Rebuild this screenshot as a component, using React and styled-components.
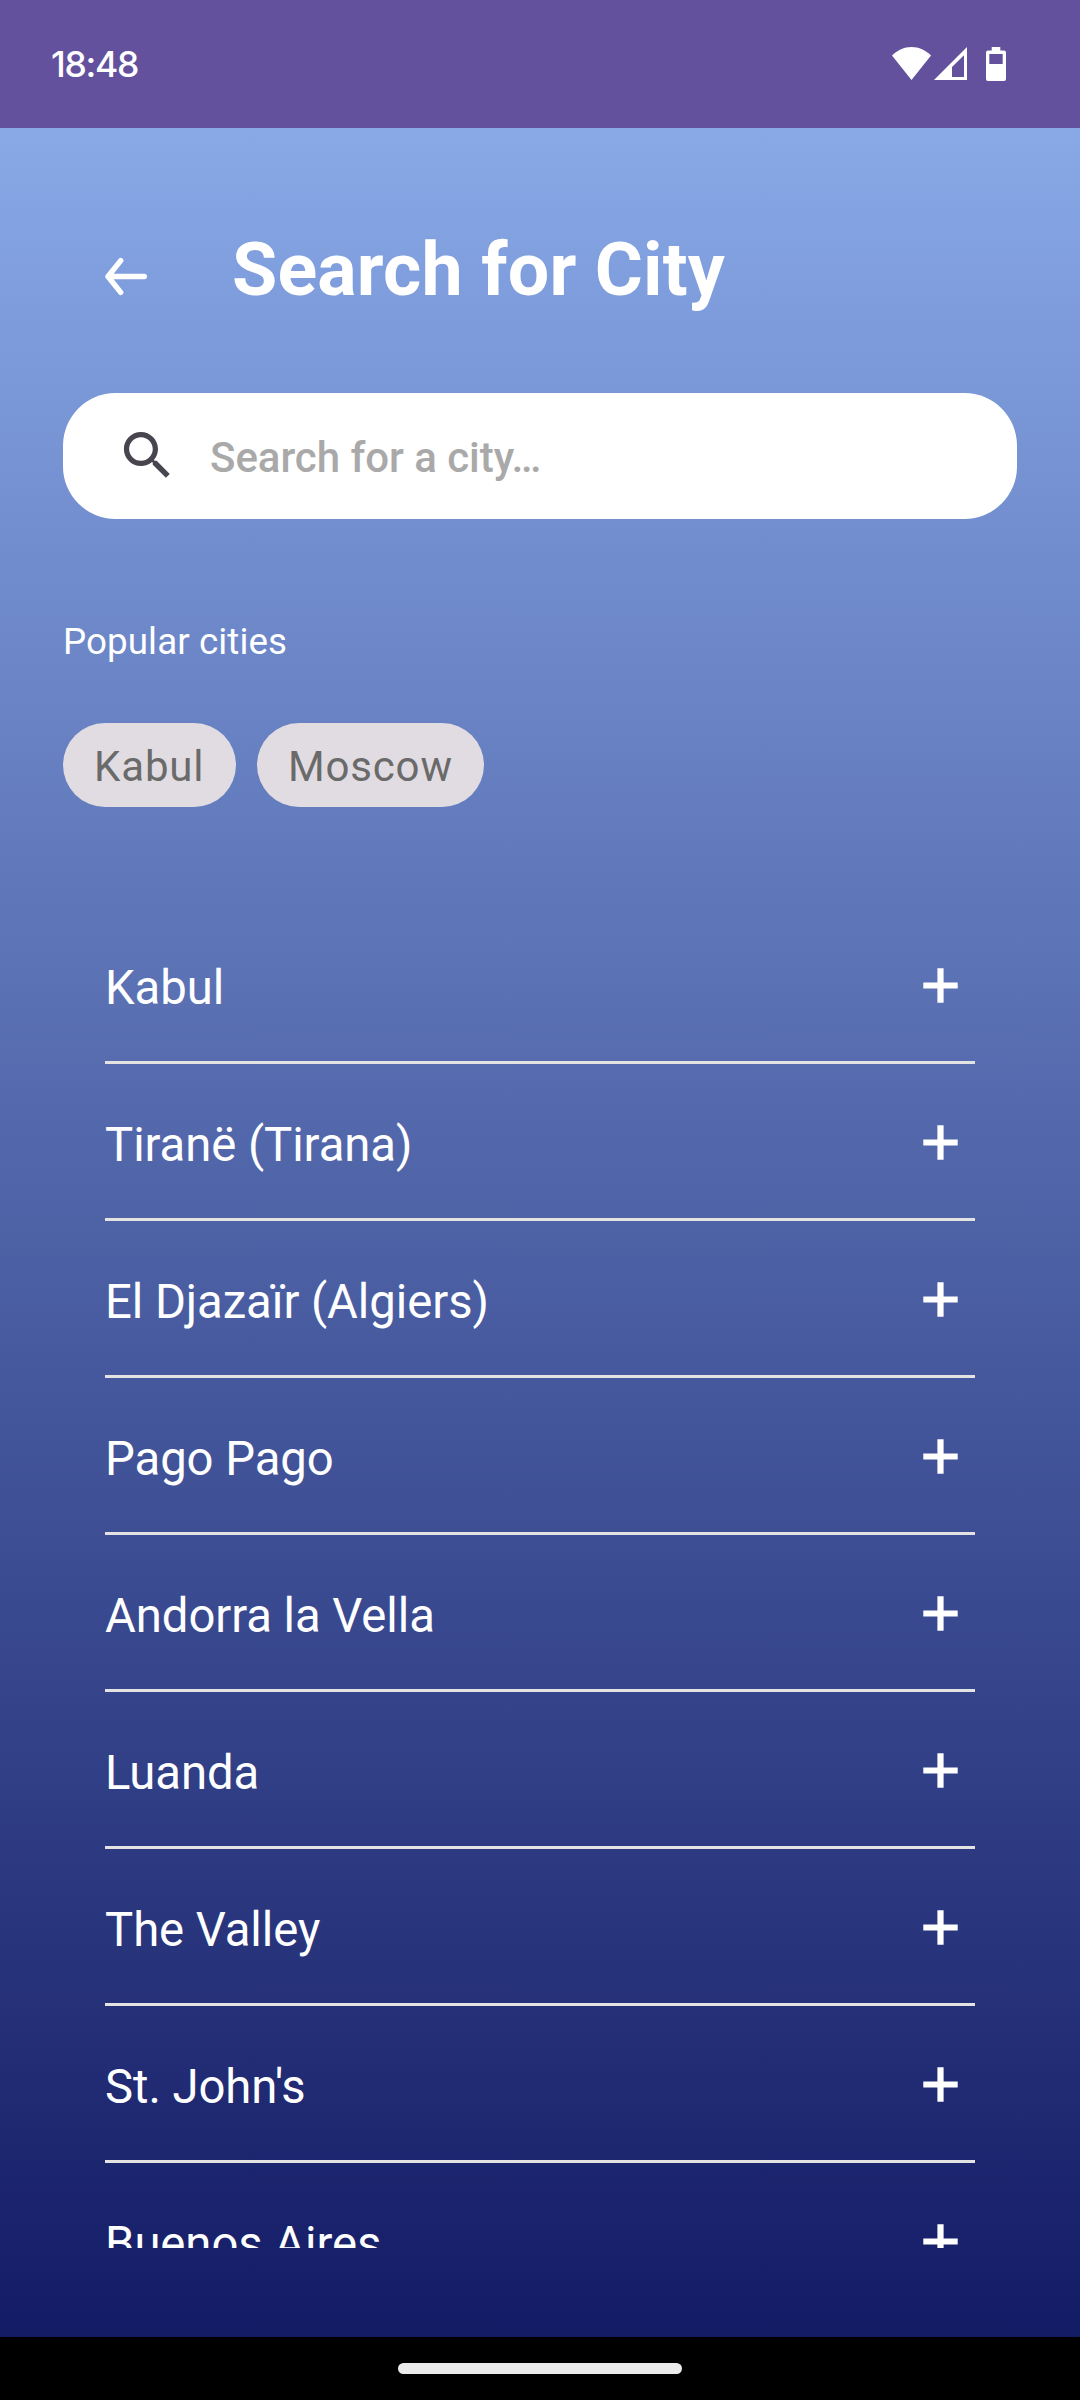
import React from "react";
import styled, { createGlobalStyle } from "styled-components";

const GlobalStyle = createGlobalStyle`
  * { box-sizing: border-box; }
  body { margin: 0; font-family: Roboto, "Noto Sans", sans-serif; }
  ul { list-style: none; margin: 0; padding: 0; }
  svg { display: block; flex: none; }
`;

const Screen = styled.div`
  width: 1080px;
  height: 2400px;
  display: flex;
  flex-direction: column;
  overflow: hidden;
  color: #fff;
`;

const StatusBar = styled.header`
  height: 128px;
  flex: none;
  display: flex;
  align-items: center;
  justify-content: space-between;
  padding: 0 74px 0 51px;
  background: #64519e;
`;

const Clock = styled.time`
  padding-top: 2px;
  font: 550 35.5px/44px Inter, sans-serif;
  letter-spacing: -1.3px;
`;

const StatusIcons = styled.div`
  display: flex;
  align-items: center;
`;

const Content = styled.main`
  flex: 1;
  min-height: 0;
  display: flex;
  flex-direction: column;
  padding: 96px 63px 89px;
  background: linear-gradient(180deg, #88a8e6 0%, #131b65 100%);
`;

const TitleRow = styled.div`
  height: 106px;
  display: flex;
  align-items: flex-start;
  padding: 3px 0 0 42px;
  gap: 85px;
`;

const BackButton = styled.button`
  border: 0;
  background: none;
  margin: 0;
  padding: 30px 0 0;
`;

const Title = styled.h1`
  margin: 0;
  font-size: 73.5px;
  line-height: 86px;
  font-weight: 700;
  letter-spacing: 0.15px;
  white-space: nowrap;
`;

const SearchField = styled.label`
  height: 126px;
  flex: none;
  margin-top: 63px;
  display: flex;
  align-items: center;
  gap: 31px;
  padding: 0 53px 1px;
  border-radius: 52.5px;
  background: #fff;
`;

const SearchInput = styled.input`
  flex: 1;
  min-width: 0;
  border: 0;
  padding: 4px 0 0;
  outline: 0;
  background: none;
  font: 500 42px/50px Roboto, sans-serif;
  letter-spacing: -0.04px;
  &::placeholder { color: #a9a9a9; opacity: 1; }
`;

const SectionLabel = styled.h2`
  margin: 101px 0 0;
  font-size: 36.75px;
  line-height: 44px;
  font-weight: 400;
  letter-spacing: 0.08px;
`;

const Chips = styled.div`
  display: flex;
  gap: 21px;
  margin-top: 59px;
`;

const Chip = styled.button`
  height: 84px;
  border: 0;
  border-radius: 42px;
  padding: 3px 31.5px 0 31px;
  background: #e1dce2;
  color: #6a6a6a;
  font: 400 42px/50px Roboto, sans-serif;
  letter-spacing: 0.85px;
`;

const CityList = styled.ul`
  flex: 1;
  min-height: 0;
  margin-top: 100px;
  padding: 0 42px;
  overflow: hidden;
`;

const CityRow = styled.li`
  height: 157px;
  display: flex;
  align-items: center;
  justify-content: space-between;
  padding: 2px 17px 0 0;
  border-bottom: 3px solid #e3e3e3;
`;

const CityName = styled.span`
  font-size: 47.25px;
  line-height: 56px;
  padding-top: 5px;
  letter-spacing: -0.06px;
`;

const NavBar = styled.footer`
  height: 63px;
  flex: none;
  display: flex;
  align-items: center;
  justify-content: center;
  background: #000;
`;

const Handle = styled.div`
  width: 284px;
  height: 11px;
  border-radius: 5.5px;
  background: #ebebeb;
`;

const WifiIcon = () => (
  <svg width="39" height="34" viewBox="0 0 39 34" fill="#fff">
    <path d="M0 8.6C5.5 3 12 0 19.5 0S33.500 3 39 8.600L19.500 33Z" />
  </svg>
);

const SignalIcon = styled(({ className }) => (
  <svg className={className} width="33" height="34" viewBox="0 0 33 34" fill="#fff">
    <path fillRule="evenodd" d="M33 0V33H0ZM30 8.200L18 20V30H30Z" />
  </svg>
))`
  margin: 0 19px 0 3px;
`;

const BatteryIcon = () => (
  <svg width="20" height="34" viewBox="0 0 20 34" fill="#fff">
    <path
      fillRule="evenodd"
      d="M5.700 0H14.300V3.500H18Q20 3.500 20 5.500V32Q20 34 18 34H2Q0 34 0 32V5.500Q0 3.500 2 3.500H5.700ZM3.300 7V17H16.700V7Z"
    />
  </svg>
);

const BackIcon = () => (
  <svg width="42" height="39" viewBox="0 0 42 39" fill="none" stroke="#fff" strokeWidth="5.400" strokeLinecap="round" strokeLinejoin="round">
    <path d="M39.300 19.500H3M15.700 3.600L3 19.500L15.700 35.400" />
  </svg>
);

const SearchIcon = () => (
  <svg width="63" height="63" viewBox="0 0 24 24" fill="#49454f">
    <path d="M15.5 14h-.79l-.28-.27C15.410 12.590 16 11.110 16 9.500 16 5.910 13.090 3 9.500 3S3 5.910 3 9.500 5.910 16 9.500 16c1.610 0 3.090-.59 4.230-1.570l.27.28v.79l5 4.990L20.490 19l-4.990-5zm-6 0C7.010 14 5 11.990 5 9.500S7.010 5 9.500 5 14 7.010 14 9.500 11.990 14 9.500 14z" />
  </svg>
);

const PlusIcon = () => (
  <svg width="35" height="35" viewBox="0 0 35 35" fill="#fff">
    <path d="M14.400 .3H20.600V14.400H34.700V20.600H20.600V34.700H14.400V20.600H.3V14.400H14.400Z" />
  </svg>
);

const popular = ["Kabul", "Moscow"];
const cities = [
  "Kabul",
  "Tiranë (Tirana)",
  "El Djazaïr (Algiers)",
  "Pago Pago",
  "Andorra la Vella",
  "Luanda",
  "The Valley",
  "St. John's",
  "Buenos Aires",
];

export default function App() {
  return (
    <>
      <GlobalStyle />
      <Screen>
        <StatusBar>
          <Clock>18:48</Clock>
          <StatusIcons>
            <WifiIcon />
            <SignalIcon />
            <BatteryIcon />
          </StatusIcons>
        </StatusBar>
        <Content>
          <TitleRow>
            <BackButton aria-label="Back">
              <BackIcon />
            </BackButton>
            <Title>Search for City</Title>
          </TitleRow>
          <SearchField>
            <SearchIcon />
            <SearchInput placeholder="Search for a city…" />
          </SearchField>
          <SectionLabel>Popular cities</SectionLabel>
          <Chips>
            {popular.map((name) => (
              <Chip key={name}>{name}</Chip>
            ))}
          </Chips>
          <CityList>
            {cities.map((name) => (
              <CityRow key={name}>
                <CityName>{name}</CityName>
                <PlusIcon />
              </CityRow>
            ))}
          </CityList>
        </Content>
        <NavBar>
          <Handle />
        </NavBar>
      </Screen>
    </>
  );
}
